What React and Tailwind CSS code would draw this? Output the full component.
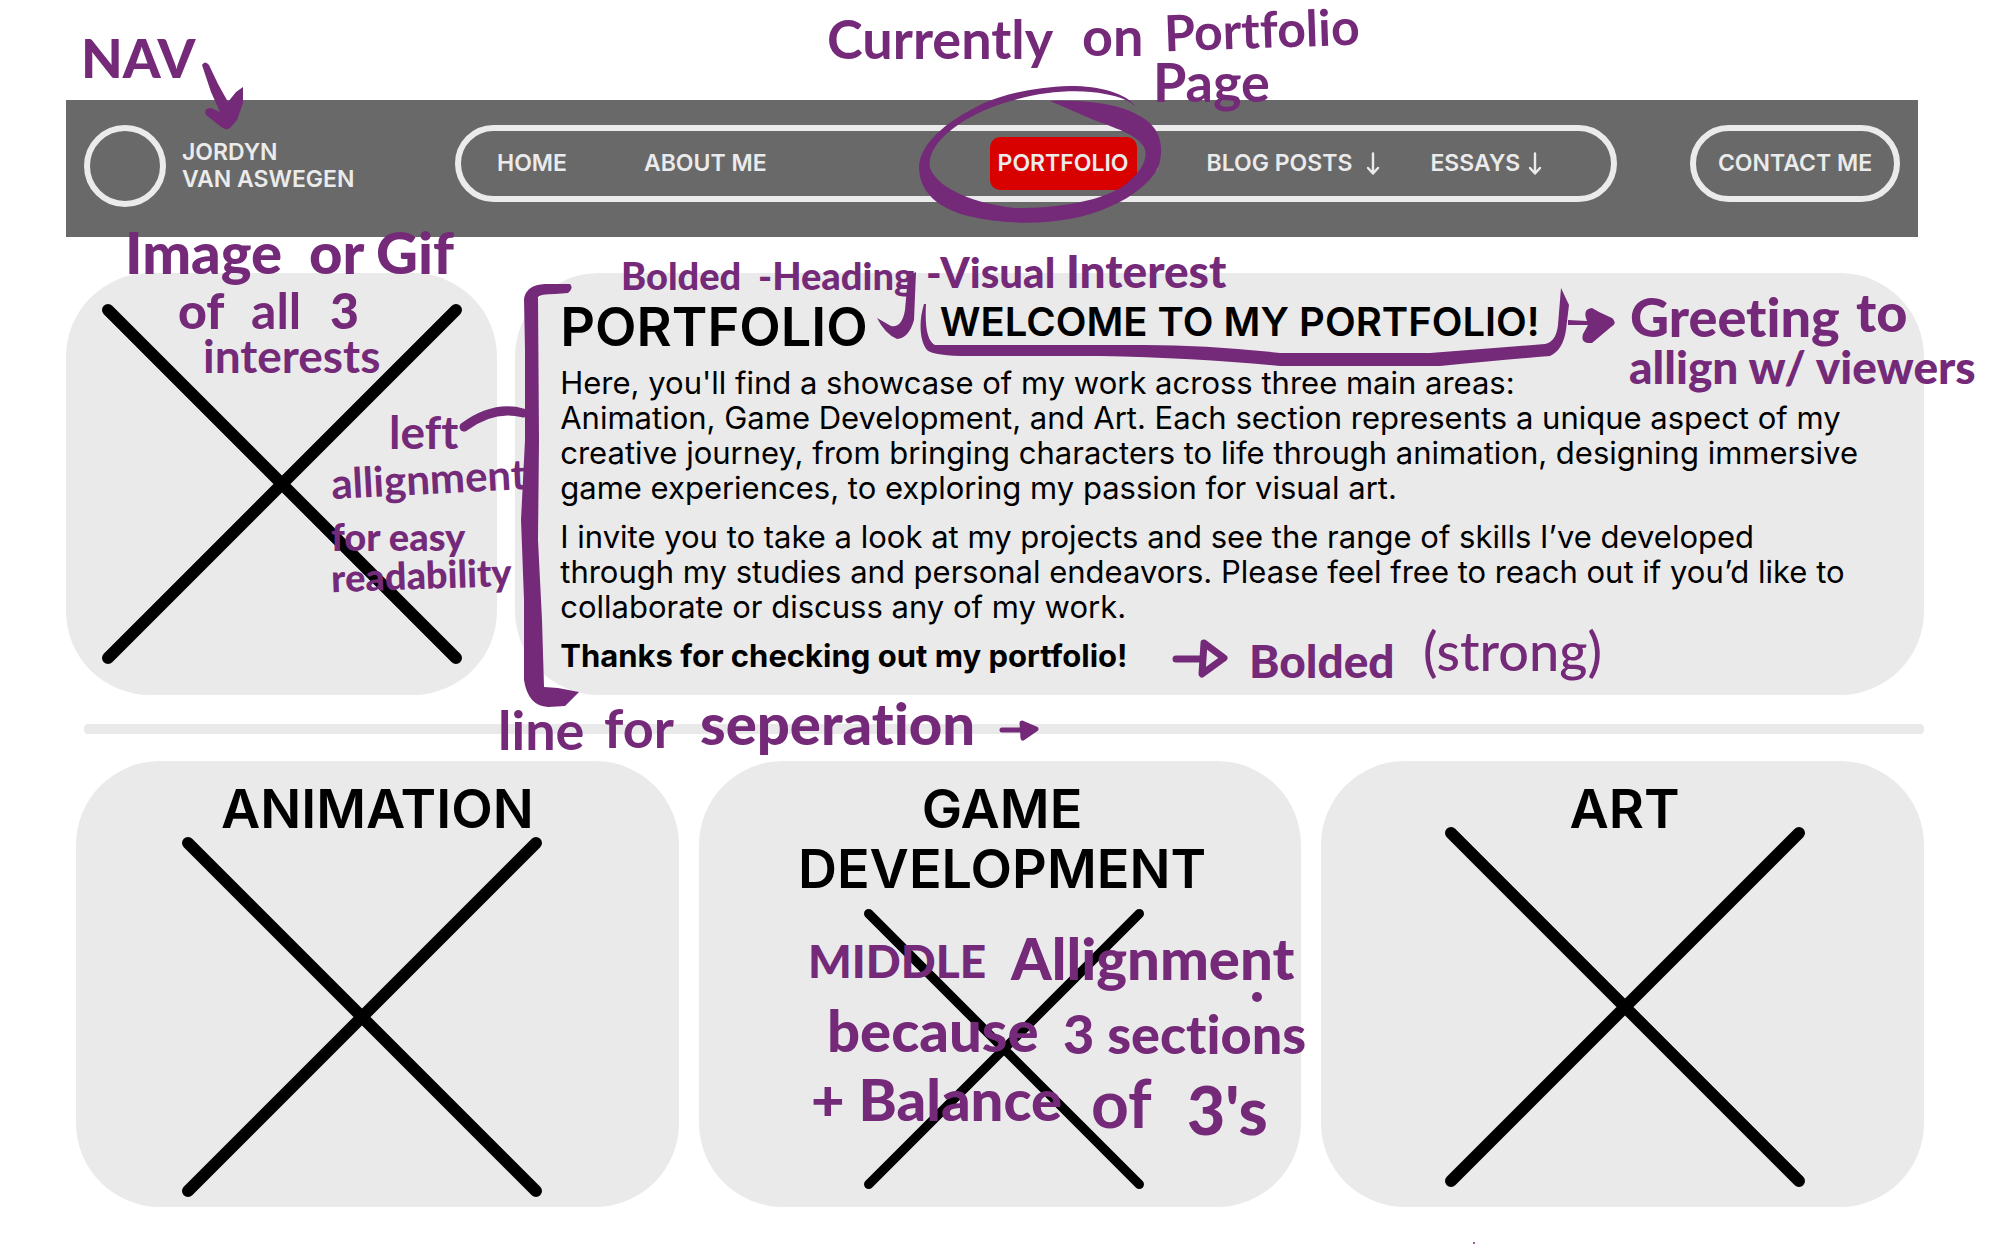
import React from "react";

const notes = [
  ["NAV", "left-[81px] top-[31px] text-[54px] font-black"],
  ["Currently", "left-[827px] top-[12px] text-[54px] font-bold"],
  ["on", "left-[1082px] top-[9px] text-[54px] font-bold"],
  ["Portfolio", "left-[1164px] top-[4px] text-[50px] font-bold -rotate-2"],
  ["Page", "left-[1153px] top-[55px] text-[54px] font-bold"],
  ["Image", "left-[125px] top-[223px] text-[58px] font-black"],
  ["or", "left-[309px] top-[223px] text-[58px] font-black"],
  ["Gif", "left-[376px] top-[223px] text-[58px] font-black"],
  ["of", "left-[178px] top-[285px] text-[50px] font-black"],
  ["all", "left-[251px] top-[285px] text-[50px] font-bold"],
  ["3", "left-[330px] top-[285px] text-[50px] font-black"],
  ["interests", "left-[203px] top-[333px] text-[46px] font-bold"],
  ["left", "left-[389px] top-[409px] text-[46px] font-bold"],
  ["allignment", "left-[331px] top-[457px] text-[42px] font-bold -rotate-3"],
  ["for easy", "left-[331px] top-[517px] text-[38px] font-black"],
  ["readability", "left-[331px] top-[555px] text-[38px] font-black -rotate-2"],
  ["Bolded", "left-[621px] top-[256px] text-[38px] font-black"],
  ["-Heading", "left-[758px] top-[256px] text-[38px] font-black"],
  ["-Visual", "left-[926px] top-[251px] text-[42px] font-black"],
  ["Interest", "left-[1066px] top-[248px] text-[46px] font-black"],
  ["Greeting", "left-[1630px] top-[290px] text-[54px] font-black"],
  ["to", "left-[1856px] top-[285px] text-[54px] font-black"],
  ["allign w/ viewers", "left-[1629px] top-[344px] text-[46px] font-black"],
  ["Bolded", "left-[1249px] top-[638px] text-[46px] font-black"],
  ["(strong)", "left-[1423px] top-[624px] text-[54px] font-medium"],
  ["line", "left-[498px] top-[703px] text-[54px] font-bold"],
  ["for", "left-[604px] top-[701px] text-[54px] font-bold"],
  ["seperation", "left-[700px] top-[694px] text-[58px] font-black"],
  ["MIDDLE", "left-[808px] top-[938px] text-[46px] font-black"],
  ["Allignment", "left-[1011px] top-[929px] text-[58px] font-black"],
  ["because", "left-[827px] top-[1001px] text-[58px] font-black"],
  ["3 sections", "left-[1063px] top-[1007px] text-[54px] font-black"],
  ["+ Balance", "left-[811px] top-[1070px] text-[58px] font-black"],
  ["of", "left-[1091px] top-[1070px] text-[66px] font-bold"],
  ["3's", "left-[1187px] top-[1077px] text-[66px] font-black"],
];

function Cross({ className, stroke = 12, label }) {
  return (
    <svg viewBox="0 0 360 360" className={className} role="img" aria-label={label}>
      <path
        d="M6 6 354 354M354 6 6 354"
        fill="none"
        stroke="#000"
        strokeWidth={stroke}
        strokeLinecap="round"
      />
    </svg>
  );
}

function DownArrow({ className }) {
  return (
    <svg viewBox="0 0 14 24" className={className} aria-hidden="true">
      <path
        d="M7 1.5V21M2 16 7 21.5 12 16"
        fill="none"
        stroke="currentColor"
        strokeWidth="2.4"
        strokeLinejoin="round"
        strokeLinecap="round"
      />
    </svg>
  );
}

function Annotations() {
  return (
    <div className="pointer-events-none absolute inset-0 overflow-hidden font-['Lato',sans-serif] text-[#742a78] [font-variant-ligatures:none]">
      <svg
        viewBox="0 0 2000 1250"
        className="absolute top-0 left-0 h-[1250px] w-[2000px]"
        fill="currentColor"
        aria-hidden="true"
      >
        {/* Arrow from NAV to the bar */}
        <path d="M202 65Q205 60 209 65L218 84 228 102 236 92 243 87 243 103 237 120 231 127Q226 132 220 126L206 115Q203 108 211 108L220 112 211 92Z" />
        {/* Loop round the current page */}
        <path d="M1136 107C1126 93 1100 86 1070 86C1035 87 1005 94 984 103C942 123 919 146 919 168C920 197 945 210 968 216C1000 224 1040 225 1075 218C1115 209 1146 190 1158 168C1165 148 1160 130 1146 120C1124 104 1090 100 1050 101L1094 120C1115 128 1136 134 1144 147C1149 158 1142 172 1122 187C1095 203 1055 208 1015 208C978 204 938 190 930 168C926 146 955 122 990 108C1030 92 1075 88 1105 94C1122 97 1131 102 1136 107Z" />
        {/* Left bracket and its connector */}
        <path d="M570 284 545 284Q526 285 524 299L525 350 525 440 521 520 524 600 524 680Q528 706 548 707L565 706 579 692 558 688 544 687 542 620 538 540 539 440 538 297Q540 294 555 294L568 293Q574 288 570 284Z" />
        <path
          d="M464 427Q494 405 523 413"
          fill="none"
          stroke="currentColor"
          strokeWidth="9"
          strokeLinecap="round"
        />
        {/* Tail under Heading */}
        <path d="M908 276 916 272 914 320Q909 338 897 339Q885 334 877 318L891 326Q902 328 905 310Z" />
        {/* Underline of the greeting */}
        <path d="M924 304C919 320 919 340 927 350Q934 356 970 356L1100 356Q1200 358 1280 366L1440 366Q1500 360 1550 356Q1563 350 1566 330L1569 305 1561 288 1558 325Q1556 342 1545 344L1430 353 1280 353Q1200 344 1130 345L935 345Q924 340 926 304Z" />
        <path d="M1568 320 1587 321Q1582 309 1592 308L1599 312 1612 318Q1618 323 1611 327L1592 343Q1580 344 1583 334L1588 325 1568 325Z" />
        {/* Arrow to Bolded (strong) */}
        <path
          d="M1176 659H1200M1204 643 1224 658 1202 674Z"
          fill="none"
          stroke="currentColor"
          strokeWidth="7"
          strokeLinecap="round"
          strokeLinejoin="round"
        />
        {/* Arrow after seperation */}
        <path
          d="M1002 730H1020M1022 723 1036 729 1023 738Z"
          stroke="currentColor"
          strokeWidth="5"
          strokeLinecap="round"
          strokeLinejoin="round"
        />
        <circle cx="1257" cy="997" r="5" />
        <circle cx="1474" cy="1243" r="1" />
      </svg>
      {notes.map(([text, place], i) => (
        <span key={i} className={`absolute leading-none whitespace-nowrap ${place}`}>
          {text}
        </span>
      ))}
    </div>
  );
}

export default function App() {
  return (
    <div className="relative min-h-[1250px] bg-white pt-[100px] pb-[43px] font-['Inter',sans-serif] text-black">
      <header className="mr-[82px] ml-[66px] flex items-start bg-[#696969] px-[18px] pt-[25px] pb-[30px] text-[23px] font-semibold text-[#ebebeb]">
        <div className="size-[82px] shrink-0 rounded-full border-[6px] border-[#ebebeb]" />
        <p className="w-[289px] shrink-0 self-center pl-4 leading-[27px]">
          JORDYN
          <br />
          VAN ASWEGEN
        </p>
        <nav className="flex h-[77px] flex-1 items-center rounded-full border-[6px] border-[#ebebeb] pl-9 whitespace-nowrap">
          <a href="#home">HOME</a>
          <a href="#about" className="ml-[77px]">ABOUT ME</a>
          <a
            href="#portfolio"
            aria-current="page"
            className="ml-[223px] flex h-[53px] items-center rounded-[10px] bg-[#d90000] px-2"
          >
            PORTFOLIO
          </a>
          <DownArrow className="ml-2 h-6 w-3.5" />
          <a href="#blog" className="ml-12 flex items-center gap-3.5">
            BLOG POSTS
            <DownArrow className="h-6 w-3.5" />
          </a>
          <a href="#essays" className="ml-[50px] flex items-center gap-2">
            ESSAYS
            <DownArrow className="h-6 w-3.5" />
          </a>
        </nav>
        <a
          href="#contact"
          className="ml-[73px] flex h-[77px] w-[210px] shrink-0 items-center justify-center rounded-full border-[6px] border-[#ebebeb]"
        >
          CONTACT ME
        </a>
      </header>

      <main className="mr-[76px]">
        <div className="mt-9 ml-[66px] grid grid-cols-[431fr_1408fr] gap-[18px]">
          <div className="flex items-center justify-center rounded-[84px] bg-[#eaeaea]">
            <Cross className="size-[360px]" label="Image placeholder" />
          </div>
          <section className="rounded-[84px] bg-[#eaeaea] pt-6 pr-[50px] pb-[22px] pl-[45px] text-[31px] leading-[35px]">
            <div className="flex items-start gap-[72px]">
              <h1 className="text-[54px] leading-[60px] font-semibold">PORTFOLIO</h1>
              <h2 className="text-[40px] leading-[50px] font-semibold">WELCOME TO MY PORTFOLIO!</h2>
            </div>
            <div className="mt-2 flex flex-col gap-3.5">
              <p>
                Here, you'll find a showcase of my work across three main areas:
                <br />
                Animation, Game Development, and Art. Each section represents a unique aspect of my
                creative journey, from bringing characters to life through animation, designing immersive
                game experiences, to exploring my passion for visual art.
              </p>
              <p>
                I invite you to take a look at my projects and see the range of skills I’ve developed
                <br />
                through my studies and personal endeavors. Please feel free to reach out if you’d like to
                collaborate or discuss any of my work.
              </p>
              <p>
                <strong className="font-bold">Thanks for checking out my portfolio!</strong>
              </p>
            </div>
          </section>
        </div>

        <hr className="mt-[29px] ml-[84px] h-2.5 rounded-sm border-0 bg-[#e9e9e9]" />

        <div className="mt-[27px] ml-[76px] grid grid-cols-3 gap-5 text-center text-[54px] leading-[60px] font-semibold">
          <section className="flex h-[446px] flex-col items-center rounded-[84px] bg-[#eaeaea] pt-[18px]">
            <h2>ANIMATION</h2>
            <Cross className="-mt-0.5 mr-[30px] size-[360px]" label="Animation placeholder" />
          </section>
          <section className="flex h-[446px] flex-col items-center rounded-[84px] bg-[#eaeaea] pt-[18px]">
            <h2 className="pl-1">
              GAME
              <br />
              DEVELOPMENT
            </h2>
            <Cross className="mt-2.5 ml-2 size-[280px]" label="Game development placeholder" />
          </section>
          <section className="flex h-[446px] flex-col items-center rounded-[84px] bg-[#eaeaea] pt-[18px]">
            <h2 className="pl-1">ART</h2>
            <Cross className="-mt-3 ml-1 size-[360px]" label="Art placeholder" />
          </section>
        </div>
      </main>

      <Annotations />
    </div>
  );
}
